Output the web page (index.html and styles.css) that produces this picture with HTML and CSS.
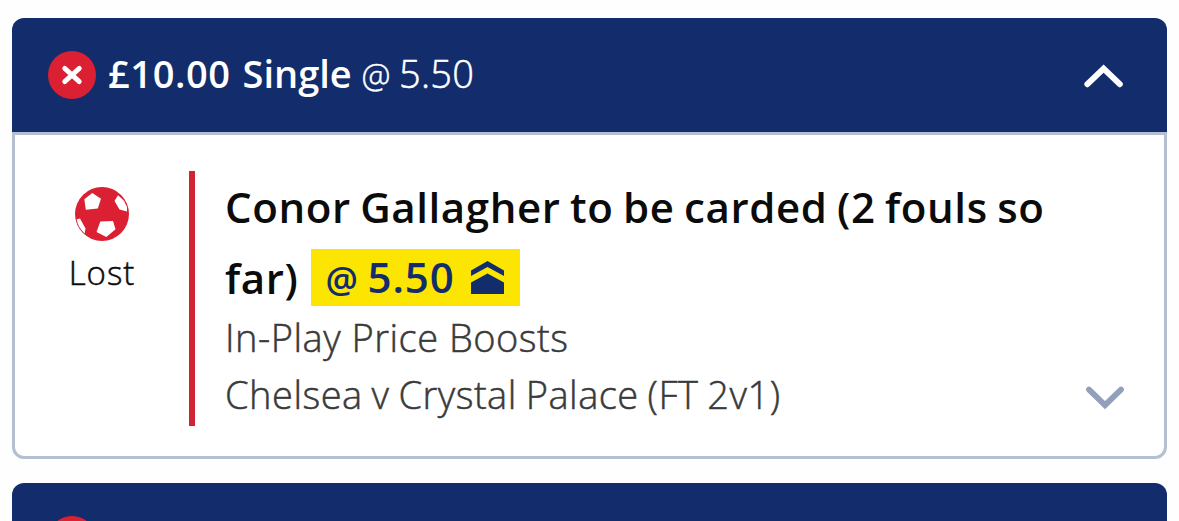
FILE: index.html
```html
<!DOCTYPE html>
<html lang="en">
<head>
  <meta charset="UTF-8">
  <meta name="viewport" content="width=device-width, initial-scale=1.0">
  <title>My Bets</title>
  <link rel="stylesheet" href="styles.css">
</head>
<body>

  <div class="bets">
    <div class="bet">
      <div class="bet-header">
        <svg class="status-icon" viewBox="0 0 48 48">
          <circle cx="24" cy="24" r="24" fill="#da2032"/>
          <path d="M16.7 17.4L31.3 30.6M31.3 17.4L16.7 30.6" stroke="#fff" stroke-width="4.8" stroke-linecap="round"/>
        </svg>
        <p class="stake"><span class="stake-amount">£10.00</span> <span class="stake-type">Single</span> <span class="stake-odds"><span class="at">@</span> 5.50</span></p>
        <svg class="chevron" viewBox="0 0 40 24">
          <path d="M3.4 21.2L19.6 5.7L35.8 21.2" fill="none" stroke="#fff" stroke-width="6" stroke-linecap="round" stroke-linejoin="miter"/>
        </svg>
      </div>

      <div class="bet-body">
        <div class="result">
          <svg class="ball" viewBox="0 0 54 54">
            <circle cx="27" cy="27" r="27" fill="#da2032"/>
            <path fill="#fff" d="M17.3 6L26 11.8L22.8 21.5L10.8 22.8L9.3 12.3Z"/>
            <path fill="#fff" d="M25.3 34.5L38 34L40.5 42.3L31.3 50L21.5 45Z"/>
            <path fill="#fff" d="M39.5 14L43 8.3L48.8 13.5L52 20V24.5L44.5 22.5Z"/>
            <path fill="#fff" d="M1.7 32.3L5 31.5L10.5 41.5L9.7 46.5C5.3 42.5 2.5 37.8 1.7 32.3Z"/>
          </svg>
          <p class="result-text">Lost</p>
        </div>
        <div class="selection">
          <h2 class="selection-name">Conor Gallagher to be carded (2 fouls so<br><span class="name-end">far)</span><span class="boost"><span class="boost-odds"><span class="at">@</span> 5.50</span><svg class="boost-icon" viewBox="0 0 33 33">
            <path fill="#132c6b" d="M0 9.5L16.5 0L33 9.5V15L16.5 6L0 15Z"/>
            <path fill="#132c6b" d="M0 21.5L16.5 12.5L33 21.5V33H0Z"/>
          </svg></span></h2>
          <p class="market">In-Play Price Boosts</p>
          <div class="event">
            <p class="event-name">Chelsea v Crystal Palace (FT 2v1)</p>
            <svg class="chevron" viewBox="0 0 40 24">
              <path d="M4 6.6L20 22.1L36 6.6" fill="none" stroke="#93a0bb" stroke-width="5.8" stroke-linecap="round" stroke-linejoin="miter"/>
            </svg>
          </div>
        </div>
      </div>
    </div>

    <div class="bet">
      <div class="bet-header">
        <svg class="status-icon" viewBox="0 0 48 48">
          <circle cx="24" cy="24" r="24" fill="#da2032"/>
        </svg>
      </div>
    </div>
  </div>

</body>
</html>
```
FILE: styles.css
```css
* {
  margin: 0;
  padding: 0;
  box-sizing: border-box;
}

body {
  font-family: "Open Sans", Arial, sans-serif;
  background-color: #fefefe;
  height: 521px;
  overflow: hidden;
}

.bets {
  height: 521px;
  padding: 18px 12px 0;
  overflow: hidden;
}

.bet {
  margin-bottom: 24px;
}

.bet-header {
  display: flex;
  align-items: center;
  height: 114px;
  padding: 0 43px 0 36px;
  background-color: #132c6b;
  color: #fff;
  border-radius: 12px 12px 0 0;
}

.status-icon {
  width: 48px;
  height: 48px;
  margin-right: 12px;
}

.stake {
  flex: 1;
  padding-bottom: 5px;
  font-size: 38px;
  font-weight: 600;
  white-space: nowrap;
}

.stake-amount {
  letter-spacing: 0.6px;
}

.stake-type {
  margin-left: 2px;
}

.stake-odds {
  font-weight: 300;
  letter-spacing: 0.3px;
  word-spacing: -2px;
  -webkit-text-stroke: 0.5px #fff;
}

.at {
  font-size: 0.86em;
}

.chevron {
  width: 40px;
  height: 24px;
  overflow: visible;
}

.bet-body {
  display: flex;
  height: 327px;
  padding: 36px 39px 30px 0;
  background-color: #fff;
  border: 3px solid #b4bfd0;
  border-radius: 0 0 12px 12px;
}

.result {
  width: 174px;
  padding-top: 16px;
  text-align: center;
}

.ball {
  display: block;
  width: 54px;
  height: 54px;
  margin: 0 auto;
}

.result-text {
  margin-top: 9px;
  font-size: 33px;
  line-height: 46px;
  font-weight: 300;
  letter-spacing: 1px;
  color: #0b0b0b;
  -webkit-text-stroke: 0.5px #0b0b0b;
}

.selection {
  flex: 1;
  padding-left: 30px;
  border-left: 6px solid #d02435;
}

.selection-name {
  font-size: 42px;
  line-height: 71px;
  font-weight: 600;
  letter-spacing: 0.6px;
  word-spacing: -2px;
  color: #0b0b0b;
  white-space: nowrap;
}

.boost {
  display: inline-flex;
  align-items: center;
  justify-content: space-between;
  width: 209px;
  height: 57px;
  margin: 7px 0 0 13px;
  padding: 0 16px 0 14px;
  background-color: #fce500;
  color: #132c6b;
  vertical-align: top;
}

.boost-odds {
  letter-spacing: 0.9px;
  word-spacing: -3px;
}

.boost-icon {
  width: 33px;
  height: 33px;
}

.market,
.event-name {
  font-size: 38px;
  line-height: 57px;
  font-weight: 300;
  letter-spacing: 0.5px;
  color: #3a3a3a;
  white-space: nowrap;
  -webkit-text-stroke: 0.5px #3a3a3a;
}

.market {
  margin-top: -4px;
}

.event-name {
  word-spacing: -1.5px;
}

.event {
  display: flex;
  align-items: center;
  justify-content: space-between;
}
```
